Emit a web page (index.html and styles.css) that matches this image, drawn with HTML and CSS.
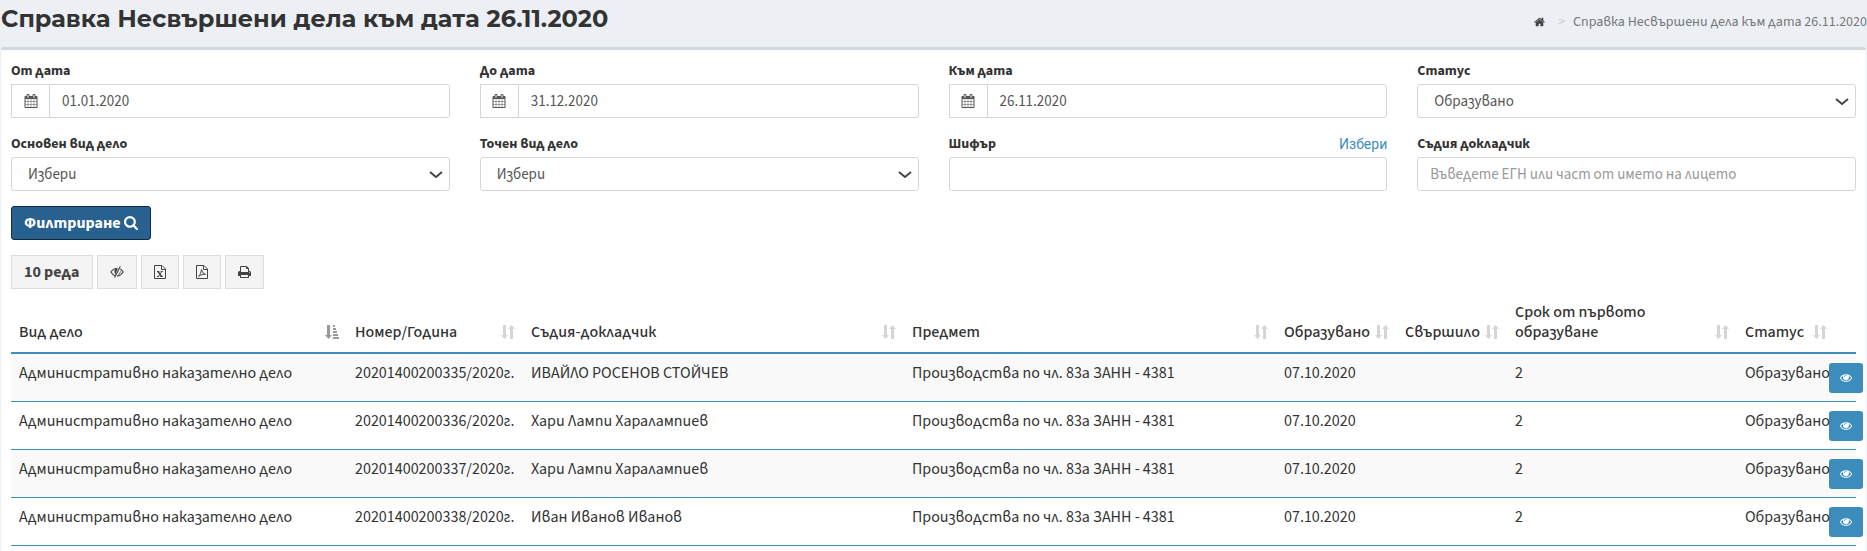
FILE: index.html
```html
<!DOCTYPE html>
<html lang="bg">
<head>
<meta charset="utf-8">
<title>Справка Несвършени дела</title>
<link rel="stylesheet" href="styles.css">
</head>
<body>
<svg class="sprite" aria-hidden="true">
  <symbol id="calendar" viewBox="0 0 1664 1792"><path d="M128 1664h288v-288h-288v288zM480 1664h320v-288h-320v288zM128 1312h288v-320h-288v320zM480 1312h320v-320h-320v320zM128 928h288v-288h-288v288zM864 1664h320v-288h-320v288zM480 928h320v-288h-320v288zM1248 1664h288v-288h-288v288zM864 1312h320v-320h-320v320zM512 448v-288q0-13-9.500-22.500t-22.500-9.500h-64q-13 0-22.500 9.500t-9.500 22.500v288q0 13 9.500 22.500t22.500 9.500h64q13 0 22.500-9.500t9.500-22.500zM1248 1312h288v-320h-288v320zM864 928h320v-288h-320v288zM1248 928h288v-288h-288v288zM1280 448v-288q0-13-9.500-22.500t-22.500-9.500h-64q-13 0-22.500 9.500t-9.500 22.500v288q0 13 9.500 22.500t22.500 9.500h64q13 0 22.500-9.500t9.500-22.500zM1664 384v1280q0 52-38 90t-90 38h-1408q-52 0-90-38t-38-90v-1280q0-52 38-90t90-38h128v-96q0-66 47-113t113-47h64q66 0 113 47t47 113v96h384v-96q0-66 47-113t113-47h64q66 0 113 47t47 113v96h128q52 0 90 38t38 90z"/></symbol>
  <symbol id="home" viewBox="0 0 1664 1408"><path d="M1408 800v480q0 26-19 45t-45 19h-384v-384h-256v384h-384q-26 0-45-19t-19-45v-480q0-1 .5-3t.5-3l575-474 575 474q1 2 1 6zM1631 731l-62 74q-8 9-21 11h-3q-13 0-21-7l-692-577-692 577q-12 8-24 7-13-2-21-11l-62-74q-8-10-7-23.500t11-21.500l719-599q32-26 76-26t76 26l244 204v-195q0-14 9-23t23-9h192q14 0 23 9t9 23v408l219 182q10 8 11 21.500t-7 23.500z"/></symbol>
  <symbol id="search" viewBox="0 0 1664 1664"><path d="M1152 704q0-185-131.500-316.500t-316.500-131.500-316.500 131.500-131.500 316.500 131.500 316.500 316.500 131.500 316.500-131.500 131.500-316.500zM1664 1536q0 52-38 90t-90 38q-54 0-90-38l-343-342q-179 124-399 124-143 0-273.500-55.500t-225-150-150-225-55.500-273.500 55.500-273.500 150-225 225-150 273.500-55.500 273.500 55.500 225 150 150 225 55.500 273.500q0 220-124 399l343 343q37 37 37 90z"/></symbol>
  <symbol id="eye" viewBox="0 0 1792 1152"><path d="M1664 576q-152-236-381-353 61 104 61 225 0 185-131.500 316.500t-316.500 131.500-316.500-131.500-131.500-316.500q0-121 61-225-229 117-381 353 133 205 333.500 326.500t434.500 121.500 434.500-121.500 333.500-326.500zM944 192q0-20-14-34t-34-14q-125 0-214.500 89.500t-89.500 214.500q0 20 14 34t34 14 34-14 14-34q0-86 61-147t147-61q20 0 34-14t14-34zM1792 576q0 34-20 69-140 230-376.500 368.500t-499.500 138.500-499.500-139-376.500-368q-20-35-20-69t20-69q140-229 376.500-368t499.500-139 499.500 139 376.500 368q20 35 20 69z"/></symbol>
  <symbol id="hidden" viewBox="0 0 16 14"><path fill="none" stroke="currentColor" stroke-width="1.300" d="M6 11.500Q3 10.500 1 7 4 2.700 8.500 2.700M11.800 3.500Q13.800 4.800 15 7 12.500 11.300 8 11.500"/><path d="M8.800 3Q4.800 3.200 5 6.500 5.200 8.800 6.500 9.700zM9.300 10.700 12.300 5.300Q12.600 9 9.300 10.700z"/><path fill="none" stroke="currentColor" stroke-width="1.300" d="M11.700.8 5.300 13.200"/></symbol>
  <symbol id="excel" viewBox="0 0 12 14"><path fill="none" stroke="currentColor" d="M.5.5h7.500l3.500 3.500v9.500H.5zM7.500.5v4h4"/><path fill="none" stroke="currentColor" stroke-width="1.400" d="M4 6.500l3.600 5"/><path fill="none" stroke="currentColor" d="M7.800 6.500l-3.600 5M3 6.500h2.300M6.700 6.500h2M3 11.500h2M6.400 11.500h2.500"/></symbol>
  <symbol id="pdf" viewBox="0 0 12 14"><path fill="none" stroke="currentColor" d="M.5.5h7.500l3.500 3.500v9.500H.5zM7.500.5v4h4"/><path fill="none" stroke="currentColor" stroke-width=".9" d="M2.500 11.500Q5 9.500 5.500 4.500 6 8.500 9.500 9.300 6 8.500 2.500 11.500"/></symbol>
  <symbol id="print" viewBox="0 0 1664 1536"><path d="M384 1408h896v-256h-896v256zM384 768h896v-384h-160q-40 0-68-28t-28-68v-160h-640v640zM1536 832q0-26-19-45t-45-19-45 19-19 45 19 45 45 19 45-19 19-45zM1664 832v416q0 13-9.500 22.500t-22.500 9.500h-224v160q0 40-28 68t-68 28h-960q-40 0-68-28t-28-68v-160h-224q-13 0-22.500-9.500t-9.500-22.500v-416q0-79 56.500-135.500t135.500-56.500h64v-544q0-40 28-68t68-28h672q40 0 88 20t76 48l152 152q28 28 48 76t20 88v256h64q79 0 135.500 56.500t56.500 135.500z"/></symbol>
  <symbol id="sort" viewBox="0 0 14 16"><path d="M2 1h3v10h2l-3.500 4L0 11h2zM9 15h3V5h2l-3.500-4L7 5h2z"/></symbol>
  <symbol id="sort-asc" viewBox="0 0 14 16"><path d="M2 1h3v10h2l-3.500 4L0 11h2zM8 1h2v2H8zM8 4h3v2H8zM8 7h4v2H8zM8 10h5v2H8zM8 13h6v2H8z"/></symbol>
</svg>

<header class="page-header">
  <h1 class="page-title" lang="ru">Справка Несвършени дела към дата 26.11.2020</h1>
  <nav class="breadcrumb" aria-label="Навигация">
    <a class="home-link" href="#" aria-label="Начало"><svg class="icon home"><use href="#home"/></svg></a>
    <span class="separator">&gt;</span>
    <span>Справка Несвършени дела към дата 26.11.2020</span>
  </nav>
</header>

<main class="box">
  <form>
    <div class="filters">
      <div class="field">
        <label for="from">От дата</label>
        <div class="date-group"><span class="addon"><svg class="icon"><use href="#calendar"/></svg></span><input class="control" id="from" type="text" value="01.01.2020"></div>
      </div>
      <div class="field">
        <label for="to">До дата</label>
        <div class="date-group"><span class="addon"><svg class="icon"><use href="#calendar"/></svg></span><input class="control" id="to" type="text" value="31.12.2020"></div>
      </div>
      <div class="field">
        <label for="as-of">Към дата</label>
        <div class="date-group"><span class="addon"><svg class="icon"><use href="#calendar"/></svg></span><input class="control" id="as-of" type="text" value="26.11.2020"></div>
      </div>
      <div class="field">
        <label for="status">Статус</label>
        <div class="select-wrap"><select class="control" id="status"><option>Образувано</option></select><svg class="chevron" viewBox="0 0 14 8"><path d="M1 1l6 5 6-5"/></svg></div>
      </div>
      <div class="field">
        <label for="main-type">Основен вид дело</label>
        <div class="select-wrap"><select class="control" id="main-type"><option>Избери</option></select><svg class="chevron" viewBox="0 0 14 8"><path d="M1 1l6 5 6-5"/></svg></div>
      </div>
      <div class="field">
        <label for="exact-type">Точен вид дело</label>
        <div class="select-wrap"><select class="control" id="exact-type"><option>Избери</option></select><svg class="chevron" viewBox="0 0 14 8"><path d="M1 1l6 5 6-5"/></svg></div>
      </div>
      <div class="field">
        <div class="label-row"><label for="code">Шифър</label><a class="pick" href="#" lang="ru">Избери</a></div>
        <input class="control" id="code" type="text">
      </div>
      <div class="field">
        <label for="judge">Съдия докладчик</label>
        <input class="control" id="judge" type="text" placeholder="Въведете ЕГН или част от името на лицето">
      </div>
    </div>
    <button class="submit" type="submit">Филтриране <svg class="icon"><use href="#search"/></svg></button>
  </form>

  <div class="toolbar">
    <button class="tool" type="button">10 реда</button>
    <button class="tool" type="button" aria-label="Видимост на колони"><svg class="icon"><use href="#hidden"/></svg></button>
    <button class="tool" type="button" aria-label="Excel"><svg class="icon file"><use href="#excel"/></svg></button>
    <button class="tool" type="button" aria-label="PDF"><svg class="icon file"><use href="#pdf"/></svg></button>
    <button class="tool" type="button" aria-label="Печат"><svg class="icon printer"><use href="#print"/></svg></button>
  </div>

  <table class="cases">
    <colgroup><col class="c-kind"><col class="c-number"><col class="c-judge"><col class="c-subject"><col class="c-opened"><col class="c-closed"><col class="c-term"><col class="c-status"><col class="c-view"></colgroup>
    <thead>
      <tr>
        <th><div class="head">Вид дело<svg class="sort active"><use href="#sort-asc"/></svg></div></th>
        <th><div class="head">Номер/Година<svg class="sort"><use href="#sort"/></svg></div></th>
        <th><div class="head">Съдия-докладчик<svg class="sort"><use href="#sort"/></svg></div></th>
        <th><div class="head">Предмет<svg class="sort"><use href="#sort"/></svg></div></th>
        <th><div class="head">Образувано<svg class="sort"><use href="#sort"/></svg></div></th>
        <th><div class="head">Свършило<svg class="sort"><use href="#sort"/></svg></div></th>
        <th><div class="head">Срок от първото<br>образуване<svg class="sort"><use href="#sort"/></svg></div></th>
        <th class="tight"><div class="head">Статус<svg class="sort"><use href="#sort"/></svg></div></th>
        <th></th>
      </tr>
    </thead>
    <tbody>
      <tr><td>Административно наказателно дело</td><td>20201400200335/2020г.</td><td>ИВАЙЛО РОСЕНОВ СТОЙЧЕВ</td><td>Производства по чл. 83а ЗАНН - 4381</td><td>07.10.2020</td><td></td><td>2</td><td>Образувано</td><td><a class="view" href="#" aria-label="Преглед"><svg class="icon eye"><use href="#eye"/></svg></a></td></tr>
      <tr><td>Административно наказателно дело</td><td>20201400200336/2020г.</td><td>Хари Лампи Харалампиев</td><td>Производства по чл. 83а ЗАНН - 4381</td><td>07.10.2020</td><td></td><td>2</td><td>Образувано</td><td><a class="view" href="#" aria-label="Преглед"><svg class="icon eye"><use href="#eye"/></svg></a></td></tr>
      <tr><td>Административно наказателно дело</td><td>20201400200337/2020г.</td><td>Хари Лампи Харалампиев</td><td>Производства по чл. 83а ЗАНН - 4381</td><td>07.10.2020</td><td></td><td>2</td><td>Образувано</td><td><a class="view" href="#" aria-label="Преглед"><svg class="icon eye"><use href="#eye"/></svg></a></td></tr>
      <tr><td>Административно наказателно дело</td><td>20201400200338/2020г.</td><td>Иван Иванов Иванов</td><td>Производства по чл. 83а ЗАНН - 4381</td><td>07.10.2020</td><td></td><td>2</td><td>Образувано</td><td><a class="view" href="#" aria-label="Преглед"><svg class="icon eye"><use href="#eye"/></svg></a></td></tr>
    </tbody>
  </table>
</main>
</body>
</html>
```
FILE: styles.css
```css
* { box-sizing: border-box; }
body {
  display: flex;
  flex-direction: column;
  min-height: 100vh;
  margin: 0;
  background: #ecf0f5;
  color: #333;
  font: 16px/20px "Source Sans Pro", "Source Sans 3", "Noto Sans", sans-serif;
}
a { color: #3c8dbc; text-decoration: none; }
input, select, button { font-family: inherit; }
.sprite { display: none; }
.icon { width: 14px; height: 14px; fill: currentColor; flex: none; }

.page-header {
  display: flex;
  align-items: flex-start;
  justify-content: space-between;
  height: 47px;
  padding-left: 1px;
}
.page-title {
  margin: 4px 0 0;
  font: 700 24px/30px Montserrat, Inter, sans-serif;
}
.breadcrumb {
  display: flex;
  align-items: center;
  padding-top: 12px;
  color: #777;
  font-size: 14px;
}
.home-link { display: flex; color: #444; }
.home { width: 11px; height: 10px; }
.separator { margin: 0 8px 0 13px; color: #ccc; }

.box {
  flex: 1;
  margin: 0 1px;
  padding: 13px 10px 0;
  border-top: 3px solid #d2d6de;
  border-radius: 3px 3px 0 0;
  background: #fff;
}

.filters {
  display: grid;
  grid-template-columns: repeat(4, minmax(0, 1fr));
  gap: 18px 30px;
}
.field label {
  display: block;
  height: 16px;
  margin-bottom: 5px;
  font-size: 14px;
  line-height: 16px;
  font-weight: 700;
}
.label-row { display: flex; justify-content: space-between; }
.pick { height: 16px; font: 14px/16px Roboto, sans-serif; }
.control {
  display: block;
  width: 100%;
  height: 34px;
  padding: 6px 12px;
  border: 1px solid #d2d6de;
  border-radius: 3px;
  background: #fff;
  color: #555;
  font-size: 15px;
  line-height: 20px;
}
.control::placeholder { color: #999; }
.date-group { display: flex; }
.addon {
  display: flex;
  flex: none;
  align-items: center;
  justify-content: center;
  width: 38px;
  border: 1px solid #d2d6de;
  border-right: 0;
  color: #555;
}
.date-group .control { border-radius: 0 3px 3px 0; }
.select-wrap { position: relative; }
.select-wrap .control { appearance: none; padding: 7px 16px 5px; }
.chevron {
  position: absolute;
  right: 7px;
  top: 14px;
  width: 14px;
  height: 8px;
  fill: none;
  stroke: #444;
  stroke-width: 2;
  pointer-events: none;
}
.submit {
  display: flex;
  align-items: center;
  gap: 3px;
  height: 34px;
  margin-top: 15px;
  padding: 0 12px;
  border: 1px solid #122b40;
  border-radius: 3px;
  background: #286090;
  color: #fff;
  font-size: 16px;
  font-weight: 700;
}

.toolbar { display: flex; gap: 4px; margin: 15px 0 5px; }
.tool {
  display: flex;
  align-items: center;
  justify-content: center;
  height: 34px;
  padding: 0 12px;
  border: 1px solid #ddd;
  background: #f4f4f4;
  color: #444;
  font-size: 16px;
  font-weight: 700;
}
.file { width: 12px; }
.printer { width: 13px; height: 12px; }

.cases { width: 100%; table-layout: fixed; border-collapse: collapse; }
.c-kind { width: 336px; }
.c-number { width: 176px; }
.c-judge { width: 381px; }
.c-subject { width: 372px; }
.c-opened { width: 121px; }
.c-closed { width: 110px; }
.c-term { width: 230px; }
.c-status { width: 92px; }
.cases th, .cases td { padding: 8px; text-align: left; vertical-align: top; white-space: nowrap; }
.cases th {
  padding-bottom: 10px;
  border-bottom: 2px solid #3c8dbc;
  font-weight: 500;
  vertical-align: bottom;
}
.cases th.tight { padding-right: 2px; }
.cases td { height: 48px; padding-top: 9px; border-bottom: 1px solid #3c8dbc; }
.cases tbody tr:nth-child(odd) { background: #f9f9f9; }
.head { display: flex; align-items: flex-end; justify-content: space-between; }
.sort { flex: none; width: 14px; height: 16px; margin-bottom: 2px; fill: #d5d5d5; }
.sort.active { fill: #999; }
.cases td:last-child { padding: 9px 0 0; }
.view {
  display: flex;
  align-items: center;
  justify-content: center;
  width: 34px;
  height: 30px;
  border-radius: 3px;
  background: #3c8dbc;
  color: #fff;
}
.eye { width: 12px; height: 8px; }
```
